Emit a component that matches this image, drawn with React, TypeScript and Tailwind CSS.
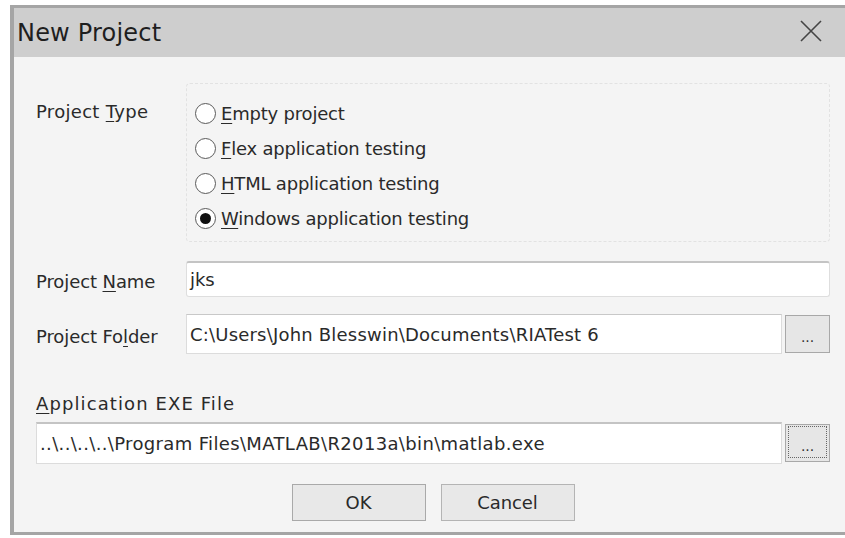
import React from "react";

const font = { fontFamily: '"DejaVu Sans", "Liberation Sans", sans-serif' };

function Key({ children }: { children: React.ReactNode }) {
  return <span className="underline underline-offset-[3px] decoration-1">{children}</span>;
}

function Radio({ checked, children }: { checked?: boolean; children: React.ReactNode }) {
  return (
    <div className="flex items-center h-[35px]">
      <span className="w-[21px] h-[21px] rounded-full border-[1.5px] border-[#5a5a5a] bg-white flex items-center justify-center mr-[5px]">
        {checked && <span className="w-[11px] h-[11px] rounded-full bg-[#111]" />}
      </span>
      <span className="text-[18px] text-[#2a2a2a] tracking-[-0.2px]">{children}</span>
    </div>
  );
}

function Browse({ focused }: { focused?: boolean }) {
  return (
    <button className="ml-[3px] w-[45px] h-[38px] bg-[#e6e6e6] border border-[#a8a8a8] flex items-end justify-center pb-[8px] text-[#333] text-[14px] leading-none">
      <span className={focused ? "border border-dotted border-[#666] w-[39px] h-[32px] flex items-end justify-center pb-[4px] -mb-[5px]" : ""}>...</span>
    </button>
  );
}

export default function App() {
  return (
    <div className="w-[845px] h-[538px] bg-white pl-[10px] pt-[5px] overflow-hidden" style={font}>
      <div className="h-[530px] border-l-[4px] border-t-[3px] border-b-[3px] border-[#a5a5a5] flex flex-col">
        <div className="h-[49px] bg-[#cecece] flex items-center justify-between pl-[3px] pr-[22px]">
          <span className="text-[24px] text-[#1e1e1e] tracking-[0.2px]">New Project</span>
          <svg width="24" height="24" viewBox="0 0 24 24" className="-mt-[4px]">
            <path d="M2 2 L22 22 M22 2 L2 22" stroke="#444" strokeWidth="1.6" fill="none" />
          </svg>
        </div>
        <div className="flex-1 bg-[#f4f4f4] pl-[22px] pr-[15px] pt-[26px] text-[#2a2a2a] text-[18px] tracking-[-0.1px]">
          <div className="flex">
            <div className="w-[150px] pt-[15px] tracking-[0.3px]">
              Project <Key>T</Key>ype
            </div>
            <div className="flex-1 h-[159px] border border-dashed border-[#e2e2e2] rounded-[4px] pl-[8px] pt-[12px]">
              <Radio><Key>E</Key>mpty project</Radio>
              <Radio><Key>F</Key>lex application testing</Radio>
              <Radio><Key>H</Key>TML application testing</Radio>
              <Radio checked><Key>W</Key>indows application testing</Radio>
            </div>
          </div>

          <div className="flex items-center mt-[19px]">
            <div className="w-[150px] pt-[4px]">
              Project <Key>N</Key>ame
            </div>
            <div className="flex-1 h-[36px] bg-white border border-[#dedede] border-t-[#c4c4c4] border-t-2 rounded-[3px] flex items-center pl-[3px]">
              jks
            </div>
          </div>

          <div className="flex items-center mt-[17px]">
            <div className="w-[150px] pt-[4px]">
              Project Fo<Key>l</Key>der
            </div>
            <div className="flex-1 h-[40px] bg-white border border-[#dcdcdc] border-t-[#c8c8c8] flex items-center pl-[3px] tracking-[0.2px]">
              C:\Users\John Blesswin\Documents\RIATest 6
            </div>
            <Browse />
          </div>

          <div className="mt-[41px] leading-none tracking-[1.1px]">
            <Key>A</Key>pplication EXE File
          </div>
          <div className="flex items-center mt-[9px]">
            <div className="flex-1 h-[42px] bg-white border border-[#dcdcdc] border-t-[#c4c4c4] border-t-2 flex items-center pl-[3px] tracking-[0.35px]">
              ..\..\..\..\Program Files\MATLAB\R2013a\bin\matlab.exe
            </div>
            <Browse focused />
          </div>

          <div className="flex justify-center gap-[15px] mt-[20px]">
            <button className="w-[134px] h-[37px] bg-[#e8e8e8] border border-[#a9a9a9] text-[18px] text-[#2a2a2a]">OK</button>
            <button className="w-[134px] h-[37px] bg-[#e8e8e8] border border-[#b4b4b4] text-[18px] text-[#2a2a2a]">Cancel</button>
          </div>
        </div>
      </div>
    </div>
  );
}
